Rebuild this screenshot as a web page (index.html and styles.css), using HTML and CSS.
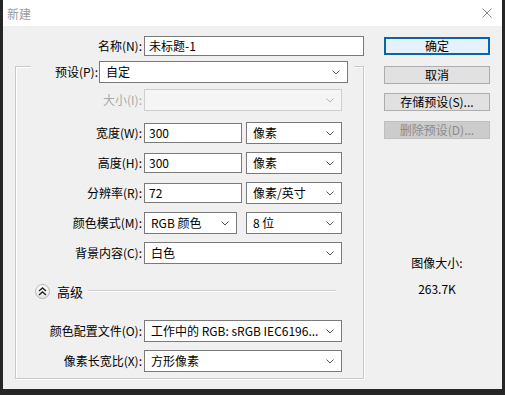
FILE: index.html
```html
<!DOCTYPE html>
<html lang="zh-CN">
<head>
  <meta charset="UTF-8" />
  <title>新建</title>
  <link rel="stylesheet" href="styles.css">
</head>
<body>

  <div class="window">
    <!-- Title bar -->
    <div class="titlebar">
      <span class="title">新建</span>
      <svg class="close" width="10" height="10" viewBox="0 0 10 10">
        <path d="M0.5 0.5 L9.5 9.5 M9.5 0.5 L0.5 9.5" stroke="#8a8a8a" stroke-width="1" fill="none"/>
      </svg>
    </div>

    <div class="content">
      <div class="main">
        <div class="row name-row">
          <label class="lbl">名称(N):</label>
          <div class="field w-name">未标题-1</div>
        </div>

        <div class="group">
          <div class="row preset-row">
            <label class="lbl lbl-preset">预设(P):</label>
            <div class="select w-preset">自定<svg class="arrow" width="8" height="5" viewBox="0 0 8 5"><polyline points="0.5,0.5 4,4 7.5,0.5"/></svg></div>
          </div>

          <div class="row size-row">
            <label class="lbl disabled">大小(I):</label>
            <div class="select w-full is-disabled"><svg class="arrow" width="8" height="5" viewBox="0 0 8 5"><polyline points="0.5,0.5 4,4 7.5,0.5"/></svg></div>
          </div>

          <div class="row first-dim">
            <label class="lbl">宽度(W):</label>
            <div class="field w-num">300</div>
            <div class="select w-unit">像素<svg class="arrow" width="8" height="5" viewBox="0 0 8 5"><polyline points="0.5,0.5 4,4 7.5,0.5"/></svg></div>
          </div>

          <div class="row">
            <label class="lbl">高度(H):</label>
            <div class="field w-num">300</div>
            <div class="select w-unit">像素<svg class="arrow" width="8" height="5" viewBox="0 0 8 5"><polyline points="0.5,0.5 4,4 7.5,0.5"/></svg></div>
          </div>

          <div class="row">
            <label class="lbl">分辨率(R):</label>
            <div class="field w-num">72</div>
            <div class="select w-unit">像素/英寸<svg class="arrow" width="8" height="5" viewBox="0 0 8 5"><polyline points="0.5,0.5 4,4 7.5,0.5"/></svg></div>
          </div>

          <div class="row">
            <label class="lbl">颜色模式(M):</label>
            <div class="select w-mode">RGB 颜色<svg class="arrow" width="8" height="5" viewBox="0 0 8 5"><polyline points="0.5,0.5 4,4 7.5,0.5"/></svg></div>
            <div class="select w-unit">8 位<svg class="arrow" width="8" height="5" viewBox="0 0 8 5"><polyline points="0.5,0.5 4,4 7.5,0.5"/></svg></div>
          </div>

          <div class="row">
            <label class="lbl">背景内容(C):</label>
            <div class="select w-full">白色<svg class="arrow" width="8" height="5" viewBox="0 0 8 5"><polyline points="0.5,0.5 4,4 7.5,0.5"/></svg></div>
          </div>

          <!-- Advanced section toggle -->
          <div class="advanced">
            <span class="adv-btn">
              <svg width="9" height="9" viewBox="0 0 9 9">
                <polyline points="1,4 4.5,1 8,4" fill="none" stroke="#222" stroke-width="1.4"/>
                <polyline points="1,8 4.5,5 8,8" fill="none" stroke="#222" stroke-width="1.4"/>
              </svg>
            </span>
            <span class="adv-text">高级</span>
            <span class="adv-line"></span>
          </div>

          <div class="row profile-row">
            <label class="lbl">颜色配置文件(O):</label>
            <div class="select w-full">工作中的 RGB: sRGB IEC6196...<svg class="arrow" width="8" height="5" viewBox="0 0 8 5"><polyline points="0.5,0.5 4,4 7.5,0.5"/></svg></div>
          </div>

          <div class="row">
            <label class="lbl">像素长宽比(X):</label>
            <div class="select w-full">方形像素<svg class="arrow" width="8" height="5" viewBox="0 0 8 5"><polyline points="0.5,0.5 4,4 7.5,0.5"/></svg></div>
          </div>
        </div>
      </div>

      <div class="side">
        <button class="btn default">确定</button>
        <button class="btn">取消</button>
        <button class="btn">存储预设(S)...</button>
        <button class="btn" disabled>删除预设(D)...</button>

        <div class="info">
          <div class="info-label">图像大小:</div>
          <div class="info-value">263.7K</div>
        </div>
      </div>
    </div>
  </div>

</body>
</html>
```

FILE: styles.css
```css
body {
  margin: 0;
  background-color: #262626;
  font-family: "Noto Sans CJK SC", "Noto Sans", sans-serif;
  font-size: 12px;
  color: #000;
}

.window {
  width: 499px;
  height: 389px;
  margin-left: 3px;
  background-color: #f0f0f0;
}

/* Title bar */
.titlebar {
  height: 26px;
  background-color: #fff;
  display: flex;
  align-items: center;
  justify-content: space-between;
  padding: 0 10px 0 4px;
}
.title {
  color: #9a9a9a;
  font-size: 12px;
}
.close {
  display: block;
}

.content {
  display: flex;
  padding-top: 10px;
}

.main {
  width: 370px;
}

.row {
  display: flex;
  align-items: center;
  height: 22px;
  margin-top: 8px;
}

.lbl {
  flex: none;
  width: 126px;
  margin-right: 2px;
  text-align: right;
  line-height: 22px;
  white-space: nowrap;
}
.lbl.disabled {
  color: #a8a8a8;
}

.name-row {
  margin-top: 0;
  height: 20px;
}
.name-row .lbl {
  width: 139px;
}

/* Group box with etched border */
.group {
  width: 347px;
  margin-left: 12px;
  margin-top: 10px;
  border: 1px solid #c9c9c9;
  box-shadow: inset 1px 1px 0 #fff, 1px 1px 0 #fff;
  padding-bottom: 6px;
}

.preset-row {
  margin: -6px 9px 0 15px;
  background-color: #f0f0f0;
}
.lbl-preset {
  width: 67px;
  margin-right: 1px;
}

.size-row {
  margin-top: 6px;
}
.first-dim {
  margin-top: 11px;
}

/* Text fields and combo boxes */
.field {
  box-sizing: border-box;
  height: 20px;
  line-height: 18px;
  padding-left: 4px;
  background-color: #fff;
  border: 1px solid #7a7a7a;
  white-space: nowrap;
}

.select {
  box-sizing: border-box;
  position: relative;
  height: 22px;
  line-height: 20px;
  padding-left: 6px;
  background-color: #fff;
  border: 1px solid #7a7a7a;
  white-space: nowrap;
}
.select .arrow {
  position: absolute;
  right: 7px;
  top: 8px;
  fill: none;
  stroke: #555;
  stroke-width: 1;
}
.select.is-disabled {
  background-color: #f5f5f5;
  border-color: #cfcfcf;
}
.select.is-disabled .arrow {
  stroke: #b5b5b5;
}

.w-name { width: 220px; }
.w-preset { width: 249px; }
.w-full { width: 198px; }
.w-num { width: 98px; margin-right: 4px; }
.w-unit { width: 96px; }
.w-mode { width: 93px; margin-right: 9px; }

/* Advanced toggle */
.advanced {
  display: flex;
  align-items: center;
  height: 16px;
  margin-top: 19px;
  padding-left: 19px;
}
.adv-btn {
  box-sizing: border-box;
  width: 15px;
  height: 15px;
  border: 1px solid #b4b4b4;
  border-radius: 50%;
  background: linear-gradient(#fff, #e4e4e4);
  display: flex;
  align-items: center;
  justify-content: center;
}
.adv-btn svg {
  display: block;
}
.adv-text {
  margin-left: 7px;
  font-size: 13px;
}
.adv-line {
  flex: none;
  width: 248px;
  margin-left: 5px;
  height: 0;
  border-top: 1px solid #cdcdcd;
  border-bottom: 1px solid #fff;
}

.profile-row {
  margin-top: 21px;
}

/* Right column */
.side {
  width: 106px;
  padding-left: 11px;
  padding-top: 1px;
  display: flex;
  flex-direction: column;
}

.btn {
  box-sizing: border-box;
  height: 18px;
  width: 106px;
  margin: 0 0 10px 0;
  padding: 0;
  font-family: inherit;
  font-size: 12px;
  line-height: 16px;
  color: #000;
  background-color: #e1e1e1;
  border: 1px solid #adadad;
}
.btn.default {
  background-color: #e5f1fb;
  border-color: #0a64ad;
  box-shadow: inset 0 0 0 1px #0a64ad;
  margin-bottom: 11px;
}
.btn:nth-child(2) {
  margin-bottom: 9px;
}
.btn:disabled {
  background-color: #cccccc;
  border-color: #bfbfbf;
  color: #8a8a8a;
}

.info {
  margin-top: 106px;
  text-align: center;
  line-height: 16px;
}
.info-value {
  margin-top: 10px;
}
```
